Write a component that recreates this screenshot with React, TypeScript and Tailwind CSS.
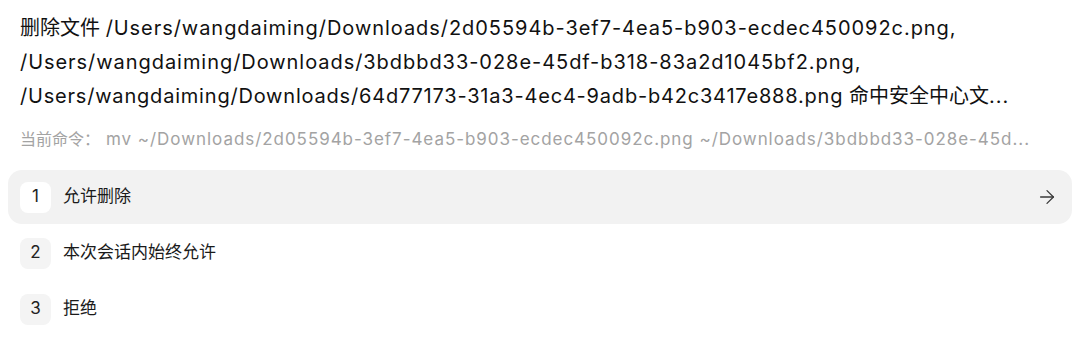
import React from "react";
import { ArrowRight } from "lucide-react";

const font = { fontFamily: 'Inter, "Noto Sans CJK SC", sans-serif' };

const options = [
  { n: "1", label: "允许删除", active: true },
  { n: "2", label: "本次会话内始终允许", active: false },
  { n: "3", label: "拒绝", active: false },
];

export default function App() {
  return (
    <div className="w-[1080px] h-[345px] bg-white overflow-hidden" style={font}>
      <div className="px-5 pt-[11px]">
        <p className="text-[20px] leading-[34px] text-[#111111]">
          删除文件{" "}
          <span className="tracking-[0.95px]">
            /Users/wangdaiming/Downloads/2d05594b-3ef7-4ea5-b903-ecdec450092c.png,
          </span>
          <br />
          <span className="tracking-[0.95px]">
            /Users/wangdaiming/Downloads/3bdbbd33-028e-45df-b318-83a2d1045bf2.png,
          </span>
          <br />
          <span className="tracking-[0.8px]">
            /Users/wangdaiming/Downloads/64d77173-31a3-4ec4-9adb-b42c3417e888.png
          </span>{" "}
          命中安全中心文<span className="tracking-[1px]">...</span>
        </p>
        <p className="mt-[14px] text-[16px] leading-[24px] text-[#a3a3a3] whitespace-nowrap overflow-hidden">
          当前命令：
          <span className="ml-[6px] text-[17px] tracking-[0.95px]">
            mv ~/Downloads/2d05594b-3ef7-4ea5-b903-ecdec450092c.png ~/Downloads/3bdbbd33-028e-45d...
          </span>
        </p>
      </div>
      <div className="mt-[19px] mx-2 flex flex-col gap-[2px]">
        {options.map((o) => (
          <div
            key={o.n}
            className={
              "h-[54px] rounded-[14px] pl-3 pr-[14px] flex items-center " +
              (o.active ? "bg-[#f2f2f2]" : "bg-white")
            }
          >
            <div
              className={
                "w-[31px] h-[31px] rounded-[8px] flex items-center justify-center text-[17px] text-[#222222] " +
                (o.active ? "bg-white" : "bg-[#f4f4f4]")
              }
            >
              {o.n}
            </div>
            <span className="ml-[12px] text-[17px] text-[#1a1a1a]">{o.label}</span>
            {o.active && (
              <ArrowRight className="ml-auto text-[#3a3a3a]" size={22} strokeWidth={1.4} />
            )}
          </div>
        ))}
      </div>
    </div>
  );
}
